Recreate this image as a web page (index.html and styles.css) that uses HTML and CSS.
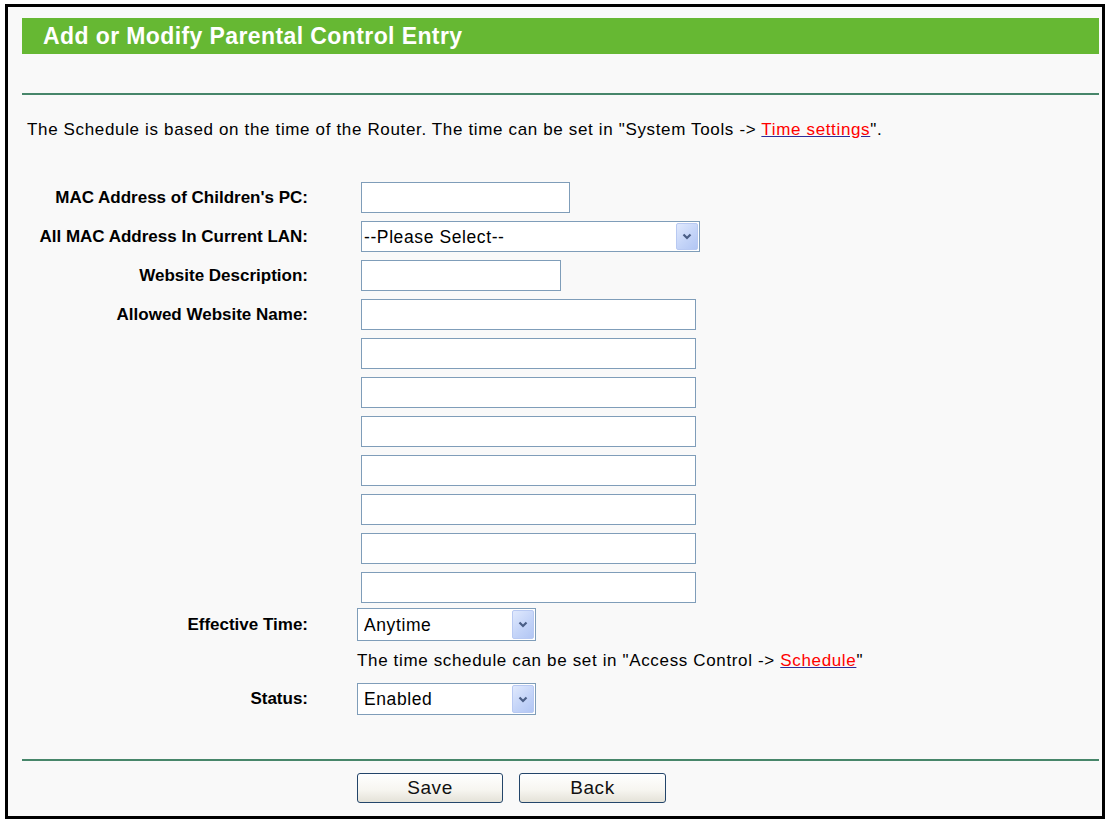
FILE: index.html
```html
<!DOCTYPE html>
<html>
<head>
<meta charset="utf-8">
<title>Add or Modify Parental Control Entry</title>
<link rel="stylesheet" href="styles.css">
</head>
<body>
<div class="frame">
  <div class="hdr">Add or Modify Parental Control Entry</div>
  <div class="rule rule-top"></div>
  <p class="note">The Schedule is based on the time of the Router. The time can be set in "System Tools -&gt; <a href="#">Time settings</a>".</p>

  <div class="form">
    <div class="row">
      <label class="lbl">MAC Address of Children's PC:</label>
      <input class="txt w-mac" type="text">
    </div>
    <div class="row">
      <label class="lbl">All MAC Address In Current LAN:</label>
      <span class="sel sel-wide">
        <select class="dd"><option>--Please Select--</option></select>
        <span class="arr"><svg width="10" height="7" viewBox="0 0 10 7"><path d="M1.5 1.5 L5 5 L8.5 1.5" stroke="#4a5e86" stroke-width="2.2" fill="none"/></svg></span>
      </span>
    </div>
    <div class="row">
      <label class="lbl">Website Description:</label>
      <input class="txt w-desc" type="text">
    </div>
    <div class="row">
      <label class="lbl">Allowed Website Name:</label>
      <input class="txt w-site" type="text">
    </div>
    <div class="row"><span class="lbl"></span><input class="txt w-site" type="text"></div>
    <div class="row"><span class="lbl"></span><input class="txt w-site" type="text"></div>
    <div class="row"><span class="lbl"></span><input class="txt w-site" type="text"></div>
    <div class="row"><span class="lbl"></span><input class="txt w-site" type="text"></div>
    <div class="row"><span class="lbl"></span><input class="txt w-site" type="text"></div>
    <div class="row"><span class="lbl"></span><input class="txt w-site" type="text"></div>
    <div class="row"><span class="lbl"></span><input class="txt w-site" type="text"></div>
  </div>

  <div class="form-b">
    <div class="row-b row-eff">
      <label class="lbl">Effective Time:</label>
      <span class="sel sel-small">
        <select class="dd"><option>Anytime</option></select>
        <span class="arr"><svg width="10" height="7" viewBox="0 0 10 7"><path d="M1.5 1.5 L5 5 L8.5 1.5" stroke="#4a5e86" stroke-width="2.2" fill="none"/></svg></span>
      </span>
    </div>
    <div class="row-b row-hint">
      <span class="lbl"></span>
      <span class="hint">The time schedule can be set in "Access Control -&gt; <a href="#">Schedule</a>"</span>
    </div>
    <div class="row-b row-status">
      <label class="lbl">Status:</label>
      <span class="sel sel-small">
        <select class="dd"><option>Enabled</option></select>
        <span class="arr"><svg width="10" height="7" viewBox="0 0 10 7"><path d="M1.5 1.5 L5 5 L8.5 1.5" stroke="#4a5e86" stroke-width="2.2" fill="none"/></svg></span>
      </span>
    </div>
  </div>

  <div class="rule rule-bot"></div>
  <div class="btns">
    <button class="btn btn-save" type="button">Save</button>
    <button class="btn btn-back" type="button">Back</button>
  </div>
</div>
</body>
</html>
```
FILE: styles.css
```css
body {
  margin: 0;
  background: #ffffff;
  font-family: "Liberation Sans", Arial, sans-serif;
  font-size: 17px;
  color: #000;
}

.frame {
  margin: 4px 0 0 5px;
  width: 1094px;
  height: 809px;
  border: 3px solid #000;
  background: #f9f9f9;
}

.hdr {
  margin: 11px 3px 0 14px;
  height: 36px;
  line-height: 36px;
  padding-left: 21px;
  background: #66b833;
  color: #fff;
  font-weight: bold;
  font-size: 23px;
  letter-spacing: 0.4px;
}

.rule {
  height: 2px;
  margin: 0 3px 0 14px;
  background: #47866a;
}
.rule-top { margin-top: 39px; }
.rule-bot { margin-top: 44px; }

.note {
  margin: 25px 0 0 19px;
  line-height: 20px;
  letter-spacing: 0.65px;
}

a {
  color: #ff0000;
  text-decoration: underline;
  text-decoration-color: #2c2c9a;
}

.form {
  margin-top: 42px;
  display: flex;
  flex-direction: column;
  gap: 8px;
}

.row {
  display: flex;
  align-items: center;
  gap: 53px;
  height: 31px;
}

.lbl {
  flex: none;
  width: 300px;
  text-align: right;
  font-weight: bold;
}

.txt {
  box-sizing: border-box;
  height: 31px;
  margin: 0;
  padding: 0 3px;
  border: 1px solid #7f9db9;
  background: #fff;
  font: inherit;
}
.w-mac { width: 209px; }
.w-desc { width: 200px; }
.w-site { width: 335px; }

.sel {
  position: relative;
  display: inline-block;
}
.dd {
  appearance: none;
  -webkit-appearance: none;
  box-sizing: border-box;
  display: block;
  margin: 0;
  border: 1px solid #7f9db9;
  border-radius: 0;
  background: #fff;
  font-family: inherit;
  font-size: 17.5px;
  letter-spacing: 0.6px;
  color: #000;
}
.sel-wide .dd {
  width: 339px;
  height: 31px;
  padding: 0 0 0 2px;
}
.sel-small .dd {
  width: 179px;
  height: 33px;
  padding: 0 0 0 6px;
}

.arr {
  position: absolute;
  top: 2px;
  bottom: 2px;
  right: 2px;
  width: 22px;
  box-sizing: border-box;
  border: 1px solid #b8c9f2;
  border-radius: 2px;
  background: linear-gradient(135deg, #e0e9fd 0%, #c4d4f8 55%, #b2c6f4 100%);
  display: flex;
  align-items: center;
  justify-content: center;
  pointer-events: none;
}

.form-b {
  margin-top: 5px;
  display: flex;
  flex-direction: column;
}
.row-b {
  display: flex;
  align-items: center;
  gap: 49px;
}
.row-eff { height: 33px; }
.row-hint { height: 20px; margin-top: 10px; }
.row-status { height: 32px; margin-top: 12px; }
.row-status .dd { height: 32px; }

.hint {
  letter-spacing: 0.65px;
  line-height: 20px;
  white-space: nowrap;
}

.btns {
  margin-top: 12px;
  padding-left: 349px;
  display: flex;
  gap: 16px;
}
.btn {
  box-sizing: border-box;
  height: 30px;
  margin: 0;
  padding: 0;
  border: 1px solid #23456a;
  border-radius: 3px;
  background: linear-gradient(#ffffff 0%, #f7f6f1 55%, #e4e2d8 100%);
  font-family: inherit;
  font-size: 19px;
  letter-spacing: 0.6px;
  color: #111;
}
.btn-save { width: 146px; }
.btn-back { width: 147px; }
```
